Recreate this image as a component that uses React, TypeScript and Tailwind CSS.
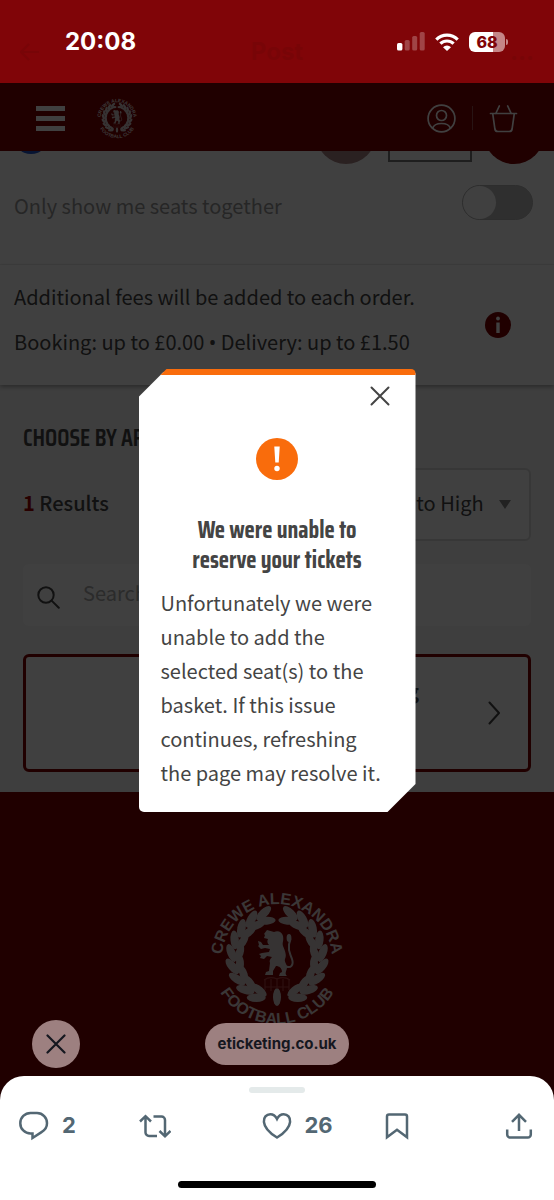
import type { FC, ReactNode } from "react";

const sourceSans = "font-['Noto_Sans_CJK_SC','Noto_Sans',sans-serif]";
const condensed =
  "font-['Saira_Condensed','Roboto_Condensed','Liberation_Sans_Narrow',sans-serif]";
const inter = "font-['Inter',sans-serif]";

const LEAVES = [22, 39, 56, 73, 90, 107, 124, 141, 158];

interface CrestProps {
  id: string;
  className: string;
}

const Crest: FC<CrestProps> = ({ id, className }) => (
  <svg viewBox="-70 -70 140 140" className={className} role="img" aria-label="Crewe Alexandra Football Club">
    <defs>
      <path id={`${id}-top`} d="M-55 2A55 55 0 0 1 55 2" />
      <path id={`${id}-bottom`} d="M-67 0A67 67 0 0 0 67 0" />
    </defs>
    <g
      fill="#e6dada"
      fontFamily="Liberation Sans, sans-serif"
      fontSize="16"
      fontWeight="bold"
      textAnchor="middle"
    >
      <text>
        <textPath href={`#${id}-top`} startOffset="50%">
          CREWE ALEXANDRA
        </textPath>
      </text>
      <text>
        <textPath href={`#${id}-bottom`} startOffset="50%">
          FOOTBALL CLUB
        </textPath>
      </text>
    </g>
    <g fill="#d8cccc">
      {[1, -1].map((side) => (
        <g key={side} transform={`scale(${side} 1)`}>
          {LEAVES.map((angle) => (
            <g key={angle} transform={`rotate(${angle})`}>
              <ellipse cx="-4" cy="-45.500" rx="9.500" ry="4.200" transform="rotate(22 -4 -45.500)" />
              <ellipse cx="-4" cy="-37.500" rx="9" ry="4" transform="rotate(-18 -4 -37.500)" />
            </g>
          ))}
        </g>
      ))}
      <ellipse cx="0" cy="40" rx="4" ry="9" />
      <path d="M-3-25c4-2 8 0 9 4 1 5-1 6 0 10 2 5 4 9 2 13-1 3 2 5 2 8 0 4-3 6 0 9H2l1-3 2-1c0-4-3-6-6-6l-3 5v4h-8l1-3 3-1 1-8c-1-2 0-4 2-6l-5-1-3 3-4-1 1-2-2-2 3-1 7-1 1-3-5-1-4 1-3-3 1-1-1-4 3 1 2 3 6 0c-2-2-2-4-1-6l-4-1 1-3-1-1 3-4z" />
    </g>
    <path
      d="M8 9c6 3 9-1 7-7s-4-8-3-14c0-3 2-4 1-8"
      fill="none"
      stroke="#d8cccc"
      strokeWidth="2"
      strokeLinecap="round"
    />
    <ellipse cx="12" cy="-19" rx="2.400" ry="4" fill="#d8cccc" />
    <path
      d="M-12 23v10m6-11v12m6-13v11m6-10v12m6-11v10M-13 23q6-4 13-1 7-3 13 1M-12 30h24"
      fill="none"
      stroke="#b04040"
      strokeWidth="1.200"
    />
  </svg>
);

const StatusBar: FC = () => (
  <div className={`grid h-[83px] bg-[#800508] ${inter}`}>
    <div
      aria-hidden="true"
      className="col-start-1 row-start-1 grid grid-cols-3 items-center px-5 pt-5 text-2xl font-bold text-[#780507]"
    >
      <svg className="h-5 w-5" viewBox="0 0 20 20" fill="none" stroke="currentColor" strokeWidth="2">
        <path d="M19 10H2M9 2l-8 8 8 8" />
      </svg>
      <span className="text-center">Post</span>
      <span className="text-right">...</span>
    </div>
    <div className="col-start-1 row-start-1 flex items-center justify-between pr-[46px] pl-[65px] text-white">
      <time className="text-2xl font-bold">20:08</time>
      <div className="flex items-center gap-[10px]">
        <svg className="h-[19px] w-7" viewBox="0 0 28 19" fill="currentColor">
          <rect x="0" y="11" width="5.400" height="7.500" rx="1.600" />
          <g opacity="0.25">
            <rect x="7.700" y="8" width="5" height="10.500" rx="1.600" />
            <rect x="15.200" y="4" width="5" height="14.500" rx="1.600" />
            <rect x="22.700" y="0" width="5" height="18.500" rx="1.600" />
          </g>
        </svg>
        <svg className="h-[18px] w-6" viewBox="0 0 24 18" fill="none" stroke="currentColor" strokeWidth="3.200">
          <path d="M1.300 6.600a15.200 15.200 0 0 1 21.400 0" />
          <path d="M5.400 10.700a9.400 9.400 0 0 1 13.200 0" />
          <path d="M8 14.200a5.700 5.700 0 0 1 8 0L12 18z" fill="currentColor" stroke="none" />
        </svg>
        <div className="flex items-center gap-px">
          <div className="flex h-5 w-9 items-center justify-center rounded-md bg-linear-to-r from-white from-67% to-[#c58687] to-67% text-base font-extrabold text-[#800508]">
            68
          </div>
          <span className="h-[6px] w-[2px] rounded-r-full bg-[#c58687]" />
        </div>
      </div>
    </div>
  </div>
);

const Header: FC = () => (
  <header className="flex h-[68px] shrink-0 items-center justify-between bg-[#800000] px-9 pt-[2px] text-white">
    <div className="flex items-center gap-[31px]">
      <button type="button" aria-label="Menu" className="flex w-[29px] flex-col gap-[5px]">
        <span className="h-[5px] bg-white" />
        <span className="h-[5px] bg-white" />
        <span className="h-[5px] bg-white" />
      </button>
      <Crest id="header-crest" className="size-[42px]" />
    </div>
    <div className="flex items-center gap-4">
      <button type="button" aria-label="Account">
        <svg className="size-[29px]" viewBox="0 0 29 29" fill="none" stroke="currentColor" strokeWidth="1.700">
          <circle cx="14.500" cy="14.500" r="13.400" />
          <circle cx="14.500" cy="11.500" r="5" />
          <path d="M5.500 24.500c1-3.400 4.400-5 9-5s8 1.600 9 5" />
        </svg>
      </button>
      <span className="h-6 w-px bg-[#a05050]" />
      <button type="button" aria-label="Basket">
        <svg
          className="size-[29px]"
          viewBox="0 0 29 29"
          fill="none"
          stroke="currentColor"
          strokeWidth="1.700"
          strokeLinecap="round"
          strokeLinejoin="round"
        >
          <path d="M1.500 9.500h26M3.700 9.500l2.200 15.500a3 3 0 0 0 3 2.500h11.200a3 3 0 0 0 3-2.500l2.200-15.500M10.300 2l-3.500 7.500M18.700 2l3.500 7.500" />
        </svg>
      </button>
    </div>
  </header>
);

const Filters: FC = () => (
  <section className="bg-white">
    <div className="flex h-[13px] items-end overflow-hidden pr-[10px] pl-[13px]">
      <span className="mb-[10px] size-9 shrink-0 rounded-full bg-[#1f50c8]" />
      <span className="ml-auto size-[60px] shrink-0 rounded-full bg-[#a88484]" />
      <span className="mx-3 mb-[2px] h-[60px] w-[84px] shrink-0 border-2 border-[#777]" />
      <span className="size-[60px] shrink-0 rounded-full bg-[#800000]" />
    </div>
    <div className="flex h-[101px] items-center justify-between border-b border-[#f0f0f0] pr-[21px] pb-6 pl-[14px]">
      <label htmlFor="together" className="pt-2 text-xl text-[#999]">
        Only show me seats together
      </label>
      <input
        id="together"
        type="checkbox"
        role="switch"
        className="h-[35px] w-[71px] appearance-none rounded-full border border-[#b4b4b4] bg-[#bdbdbd] before:block before:size-[33px] before:rounded-full before:bg-white checked:before:ml-9"
      />
    </div>
    <div className="relative flex h-[120px] items-center justify-between pr-[43px] pl-[14px] text-xl text-[#444] shadow-[0_2px_4px_#aaa]">
      <p className="pb-3 leading-[45px]">
        Additional fees will be added to each order.
        <br />
        Booking: up to £0.00 <span className="font-['Noto_Sans',sans-serif]">•</span> Delivery: up to
        £1.50
      </p>
      <button type="button" aria-label="Fee information">
        <svg className="size-[26px]" viewBox="0 0 26 26">
          <circle cx="13" cy="13" r="13" fill="#800000" />
          <circle cx="13" cy="6.500" r="1.900" fill="#fff" />
          <path d="M11.300 10.500h3.400V21h-3.400z" fill="#fff" />
        </svg>
      </button>
    </div>
  </section>
);

const Results: FC = () => (
  <section className="bg-[#f6f6f6] px-[23px] pt-[38px] pb-5 text-xl text-[#444]">
    <h2 className={`text-2xl leading-[30px] font-semibold ${condensed}`}>CHOOSE BY AREA</h2>
    <div className="mt-[15px] flex items-center justify-between">
      <p className="pb-[3px] font-medium">
        <strong className="font-bold text-[#a00000]">1</strong> Results
      </p>
      <div className="grid items-center">
        <select
          aria-label="Sort results"
          className="col-start-1 row-start-1 h-[73px] appearance-none rounded-md border-2 border-[#dcdcdc] bg-white pr-[45px] pb-[3px] pl-5"
        >
          <option>Price Low to High</option>
        </select>
        <svg
          className="pointer-events-none col-start-1 row-start-1 mr-5 h-[9px] w-3 justify-self-end"
          viewBox="0 0 12 9"
          fill="#888"
        >
          <path d="M0 0h12L6 9z" />
        </svg>
      </div>
    </div>
    <div className="mt-[23px] flex h-[62px] items-center gap-[23px] rounded-md bg-white px-[14px]">
      <svg
        className="mt-1 size-[23px] shrink-0"
        viewBox="0 0 23 23"
        fill="none"
        stroke="#444"
        strokeWidth="2"
        strokeLinecap="round"
      >
        <circle cx="9" cy="9" r="7.700" />
        <path d="M14.600 14.600l7.200 7.200" />
      </svg>
      <input
        type="search"
        aria-label="Search areas"
        placeholder="Search areas"
        className="min-w-0 flex-1 pb-1 outline-none placeholder:text-[#aaa]"
      />
    </div>
    <button
      type="button"
      className="mt-7 flex h-[118px] w-full items-center justify-end gap-[69px] rounded-md border-3 border-[#800000] bg-white pr-7"
    >
      <span className="pb-11 font-bold">Standing</span>
      <svg
        className="h-6 w-3"
        viewBox="0 0 12 24"
        fill="none"
        stroke="#444"
        strokeWidth="2"
        strokeLinecap="round"
        strokeLinejoin="round"
      >
        <path d="M1.500 1.500L11 12 1.500 22.500" />
      </svg>
    </button>
  </section>
);

const ErrorDialog: FC = () => (
  <div
    role="alertdialog"
    aria-labelledby="dialog-title"
    aria-describedby="dialog-text"
    className="flex w-1/2 min-w-[276px] flex-col rounded-[5px] border-t-6 border-[#f96c0c] bg-white px-[22px] pb-[22px] text-[#444] [clip-path:polygon(28px_0,100%_0,100%_calc(100%-28px),calc(100%-28px)_100%,0_100%,0_28px)]"
  >
    <button type="button" aria-label="Close" className="mt-[11px] mr-1 self-end">
      <svg className="size-5" viewBox="0 0 20 20" stroke="currentColor" strokeWidth="2" strokeLinecap="round">
        <path d="M1.500 1.500l17 17M18.500 1.500l-17 17" />
      </svg>
    </button>
    <svg className="mt-8 size-[42px] self-center" viewBox="0 0 42 42">
      <circle cx="21" cy="21" r="21" fill="#f96c0c" />
      <path d="M18.300 8.500h5.400l-1 16h-3.400z" fill="#fff" />
      <circle cx="21" cy="30.500" r="2.700" fill="#fff" />
    </svg>
    <h1
      id="dialog-title"
      className={`mt-[35px] text-center text-2xl leading-[30px] font-bold ${condensed}`}
    >
      We were unable to
      <br />
      reserve your tickets
    </h1>
    <p id="dialog-text" className="mt-[11px] text-xl leading-[34px]">
      Unfortunately we were
      <br />
      unable to add the
      <br />
      selected seat(s) to the
      <br />
      basket. If this issue
      <br />
      continues, refreshing
      <br />
      the page may resolve it.
    </p>
  </div>
);

interface ActionProps {
  label: string;
  count?: string;
  children: ReactNode;
}

const Action: FC<ActionProps> = ({ label, count, children }) => (
  <button type="button" aria-label={label} className="flex items-center gap-3">
    <svg
      className="h-[30px] w-8"
      viewBox="0 0 32 30"
      fill="none"
      stroke="currentColor"
      strokeWidth="2.500"
    >
      {children}
    </svg>
    {count && <span className="text-[22px] font-bold">{count}</span>}
  </button>
);

const BottomSheet: FC = () => (
  <footer className={`flex flex-col items-center rounded-t-3xl bg-white pt-[11px] pb-3 ${inter}`}>
    <span className="h-[6px] w-14 rounded-full bg-[#e4eaea]" />
    <div className="mt-4 grid w-full grid-cols-[1fr_1fr_1fr_1fr_auto] pr-[19px] pl-[18px] text-[#536773]">
      <Action label="Reply" count="2">
        <path d="M12.500 2h6.500a10 10 0 0 1 10 10.300c0 4-2.200 6.900-5.500 8.800l-9 5.900v-4.500h-2A10.200 10.200 0 0 1 2.300 12.200 10.200 10.200 0 0 1 12.500 2z" />
      </Action>
      <Action label="Repost">
        <path d="M1 10.500l5.500-5.300 5.500 5.300M6.500 5.500v16a3.500 3.500 0 0 0 3.500 3.500h8M14.500 5.500h8a3.500 3.500 0 0 1 3.500 3.500v16M20.500 20l5.500 5.300 5.500-5.300" />
      </Action>
      <Action label="Like" count="26">
        <path d="M16 8c1.700-3.300 4-4.800 6.700-4.800 4 0 6.800 3.200 6.400 7.600C28.600 16.800 22 22.800 16 26.500 10 22.800 3.400 16.800 2.900 10.800 2.500 6.400 5.300 3.200 9.300 3.200 12 3.200 14.300 4.700 16 8z" />
      </Action>
      <Action label="Bookmark">
        <path d="M5 26.300V5.500a2 2 0 0 1 2-2h16a2 2 0 0 1 2 2v20.800l-10-7.500z" />
      </Action>
      <Action label="Share">
        <path d="M16 20V4M9 10.800l7-7 7 7M4.200 18.500v5a3 3 0 0 0 3 3h17.600a3 3 0 0 0 3-3v-5" />
      </Action>
    </div>
    <span className="mt-[39px] h-[7px] w-[198px] rounded-full bg-black" />
  </footer>
);

const App: FC = () => {
  return (
    <div className={`flex min-h-screen flex-col bg-[#200000] ${sourceSans}`}>
      <StatusBar />
      <main className="grid flex-1">
        <div className="col-start-1 row-start-1 flex min-w-0 flex-col">
          <Header />
          <Filters />
          <Results />
          <div className="flex flex-1 justify-center bg-[#800000] pt-[95px]">
            <Crest id="footer-crest" className="size-[140px]" />
          </div>
        </div>
        <div className="relative col-start-1 row-start-1 flex min-w-0 flex-col items-center justify-between bg-black/75 pt-[286px] pb-2">
          <ErrorDialog />
          <div
            className={`grid w-full grid-cols-[1fr_auto_1fr] items-center px-8 text-[15px] font-bold text-[#15171f] ${inter}`}
          >
            <button
              type="button"
              aria-label="Close page"
              className="flex size-12 items-center justify-center rounded-full bg-[#9d8080]"
            >
              <svg
                className="size-5"
                viewBox="0 0 20 20"
                stroke="currentColor"
                strokeWidth="2.200"
                strokeLinecap="round"
              >
                <path d="M1.500 1.500l17 17M18.500 1.500l-17 17" />
              </svg>
            </button>
            <a href="#eticketing" className="rounded-full bg-[#9d8080] px-3 py-[10px]">
              eticketing.co.uk
            </a>
          </div>
        </div>
      </main>
      <BottomSheet />
    </div>
  );
};

export default App;
